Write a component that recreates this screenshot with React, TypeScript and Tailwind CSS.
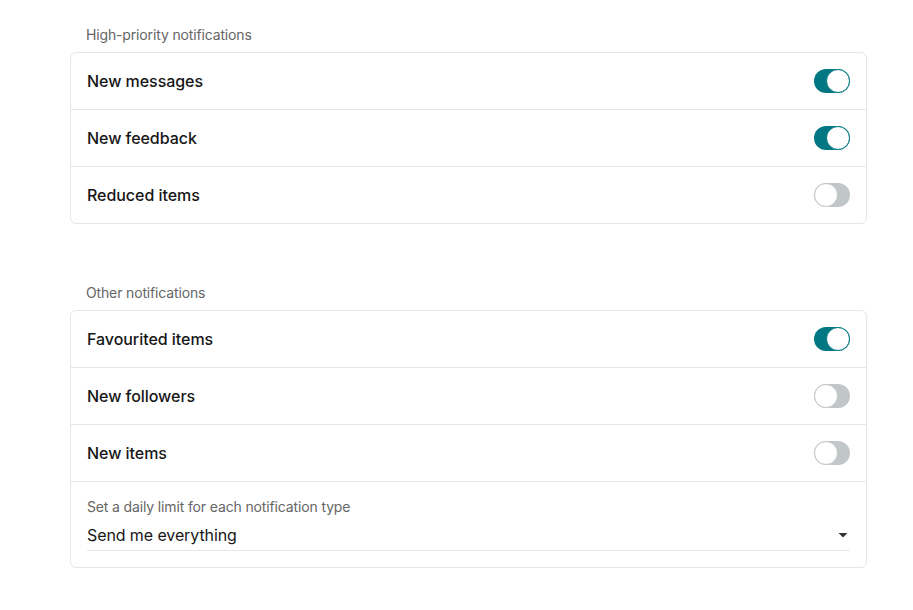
const font = { fontFamily: 'Inter, "Noto Sans", sans-serif' }

function Toggle({ on }: { on: boolean }) {
    return (
        <div
            className={`flex h-6 w-9 rounded-full ${on ? 'justify-end bg-[#007782]' : 'justify-start bg-[#c1c7c8]'}`}
        >
            <div
                className={`h-6 w-6 rounded-full border bg-white ${on ? 'border-[#007782]' : 'border-[#c1c7c8]'}`}
            />
        </div>
    )
}

function Row({ label, on, last }: { label: string; on: boolean; last?: boolean }) {
    return (
        <div
            className={`flex items-center justify-between px-4 ${last ? 'h-14' : 'h-[57px] border-b border-[#e6e6e6]'}`}
        >
            <span className="text-base font-medium tracking-[-0.05px] text-[#171717]">{label}</span>
            <Toggle on={on} />
        </div>
    )
}

function Section({ title, children }: { title: string; children: React.ReactNode }) {
    return (
        <div>
            <div className="px-4 text-sm leading-5 tracking-[-0.15px] text-[#666666]">{title}</div>
            <div className="mt-[7px] rounded-md border border-[#e6e6e6] bg-white">{children}</div>
        </div>
    )
}

export default function App() {
    return (
        <div className="min-h-[610px] w-[913px] bg-white pt-[25px]" style={font}>
            <div className="ml-[70px] w-[797px]">
                <Section title="High-priority notifications">
                    <Row label="New messages" on />
                    <Row label="New feedback" on />
                    <Row label="Reduced items" on={false} last />
                </Section>
                <div className="h-[59px]" />
                <Section title="Other notifications">
                    <Row label="Favourited items" on />
                    <Row label="New followers" on={false} />
                    <Row label="New items" on={false} />
                    <div className="px-4 pb-4 pt-[15px]">
                        <div className="text-sm leading-5 tracking-[-0.14px] text-[#666666]">
                            Set a daily limit for each notification type
                        </div>
                        <div className="mt-[6px] flex items-center justify-between border-b border-[#e6e6e6] pb-[3px]">
                            <span className="text-base leading-6 tracking-[-0.1px] text-[#171717]">Send me everything</span>
                            <svg width="12" height="12" viewBox="0 0 12 12" className="mr-[1px]">
                                <path d="M1.5 4h9L6 8.5z" fill="#333333" />
                            </svg>
                        </div>
                    </div>
                </Section>
            </div>
        </div>
    )
}
